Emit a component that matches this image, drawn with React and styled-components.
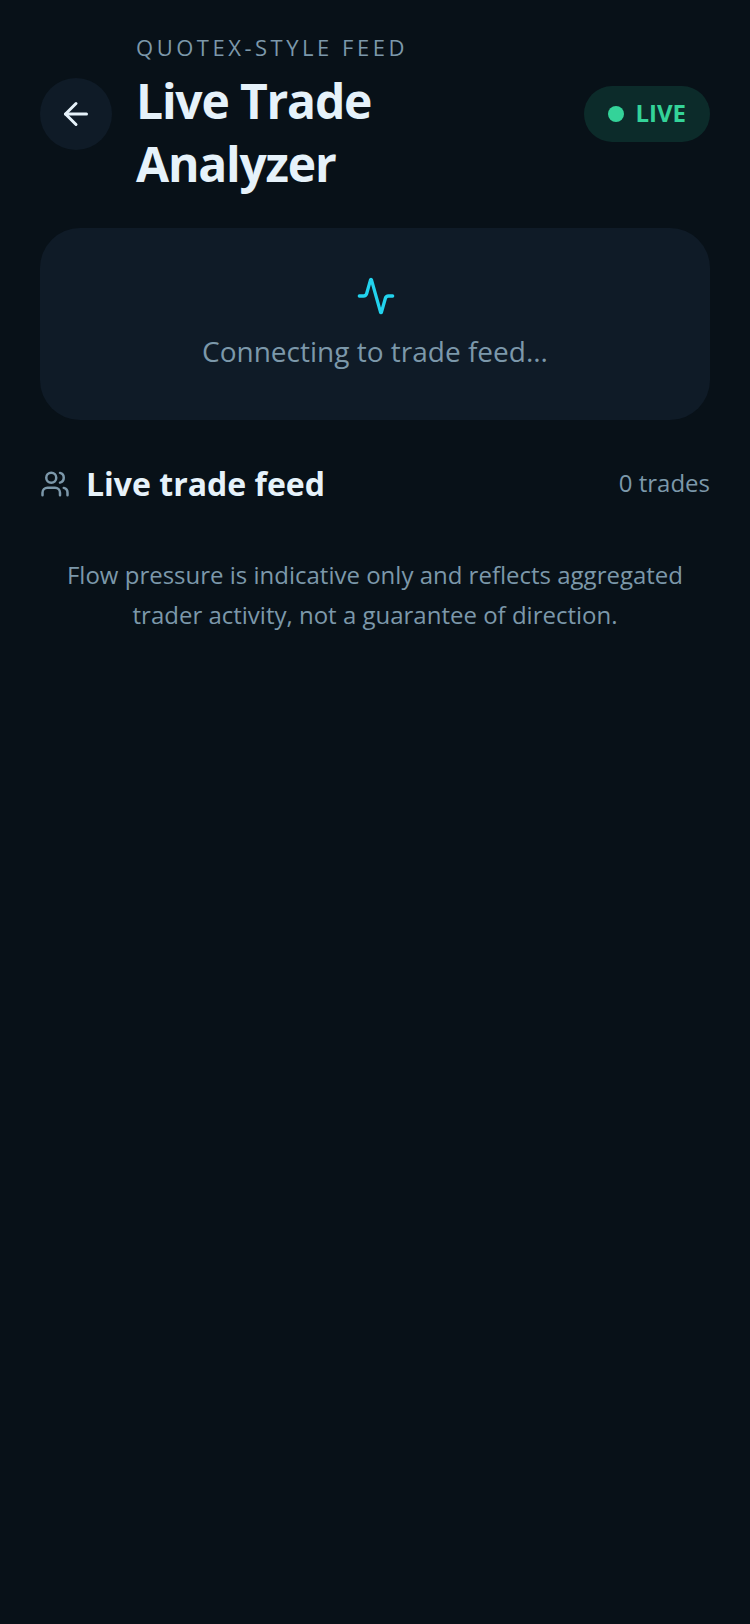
import React from "react";
import styled, { createGlobalStyle } from "styled-components";
import { ArrowLeft, Activity, Users } from "lucide-react";

const GlobalStyle = createGlobalStyle`
  html, body {
    margin: 0;
    padding: 0;
    background: #081118;
  }
  * {
    box-sizing: border-box;
  }
`;

const Page = styled.div`
  min-height: 1624px;
  padding: 31px 40px 40px;
  background: #081118;
  font-family: "Open Sans", "Noto Sans", sans-serif;
`;

const Header = styled.header`
  display: flex;
  align-items: center;
  justify-content: space-between;
`;

const HeaderLeft = styled.div`
  display: flex;
  align-items: center;
  gap: 24px;
`;

const BackButton = styled.button`
  display: flex;
  align-items: center;
  justify-content: center;
  width: 72px;
  height: 72px;
  padding: 0;
  border: 0;
  border-radius: 50%;
  background: #0f1b27;
  color: #e6f2fa;
`;

const TitleBlock = styled.div`
  display: flex;
  flex-direction: column;
  gap: 6px;
  padding-bottom: 2px;
`;

const Eyebrow = styled.div`
  font-size: 22px;
  line-height: 32px;
  letter-spacing: 3.52px;
  color: #7c98aa;
`;

const Title = styled.h1`
  margin: 0;
  width: 300px;
  font-size: 48px;
  line-height: 63px;
  font-weight: 700;
  letter-spacing: -1.2px;
  color: #e6f2fa;
`;

const LiveBadge = styled.div`
  display: flex;
  align-items: center;
  gap: 11px;
  height: 56px;
  padding: 0 24px;
  border-radius: 28px;
  background: #0c2b2a;
  color: #34d399;
`;

const LiveDot = styled.span`
  width: 16px;
  height: 16px;
  border-radius: 50%;
  background: #34d399;
`;

const LiveLabel = styled.span`
  padding-bottom: 4px;
  font-size: 24px;
  font-weight: 700;
`;

const StatusCard = styled.section`
  display: flex;
  flex-direction: column;
  align-items: center;
  gap: 15px;
  height: 192px;
  margin-top: 31px;
  padding-top: 48px;
  border-radius: 40px;
  background: #0f1b27;
`;

const PulseIcon = styled(Activity)`
  margin-left: 2px;
  color: #22d3ee;
`;

const StatusText = styled.div`
  font-size: 28px;
  line-height: 40px;
  color: #7c98aa;
`;

const SectionHeader = styled.div`
  display: flex;
  align-items: center;
  justify-content: space-between;
  margin-top: 42px;
`;

const SectionLabel = styled.div`
  display: flex;
  align-items: center;
  gap: 16px;
  color: #7c98aa;
`;

const SectionTitle = styled.h2`
  margin: 0;
  font-size: 32px;
  line-height: 44px;
  font-weight: 700;
  color: #e6f2fa;
`;

const TradeCount = styled.div`
  padding-bottom: 2px;
  font-size: 24px;
  line-height: 32px;
  color: #7c98aa;
`;

const Footnote = styled.p`
  margin: 49px 0 0;
  font-size: 24px;
  line-height: 40px;
  text-align: center;
  color: #7c98aa;
`;

export default function App() {
  return (
    <Page>
      <GlobalStyle />
      <Header>
        <HeaderLeft>
          <BackButton aria-label="Back">
            <ArrowLeft size={36} strokeWidth={2} />
          </BackButton>
          <TitleBlock>
            <Eyebrow>QUOTEX-STYLE FEED</Eyebrow>
            <Title>Live Trade Analyzer</Title>
          </TitleBlock>
        </HeaderLeft>
        <LiveBadge>
          <LiveDot />
          <LiveLabel>LIVE</LiveLabel>
        </LiveBadge>
      </Header>
      <StatusCard>
        <PulseIcon size={40} strokeWidth={2} />
        <StatusText>Connecting to trade feed...</StatusText>
      </StatusCard>
      <SectionHeader>
        <SectionLabel>
          <Users size={30} strokeWidth={2} />
          <SectionTitle>Live trade feed</SectionTitle>
        </SectionLabel>
        <TradeCount>0 trades</TradeCount>
      </SectionHeader>
      <Footnote>
        Flow pressure is indicative only and reflects aggregated trader
        activity, not a guarantee of direction.
      </Footnote>
    </Page>
  );
}
